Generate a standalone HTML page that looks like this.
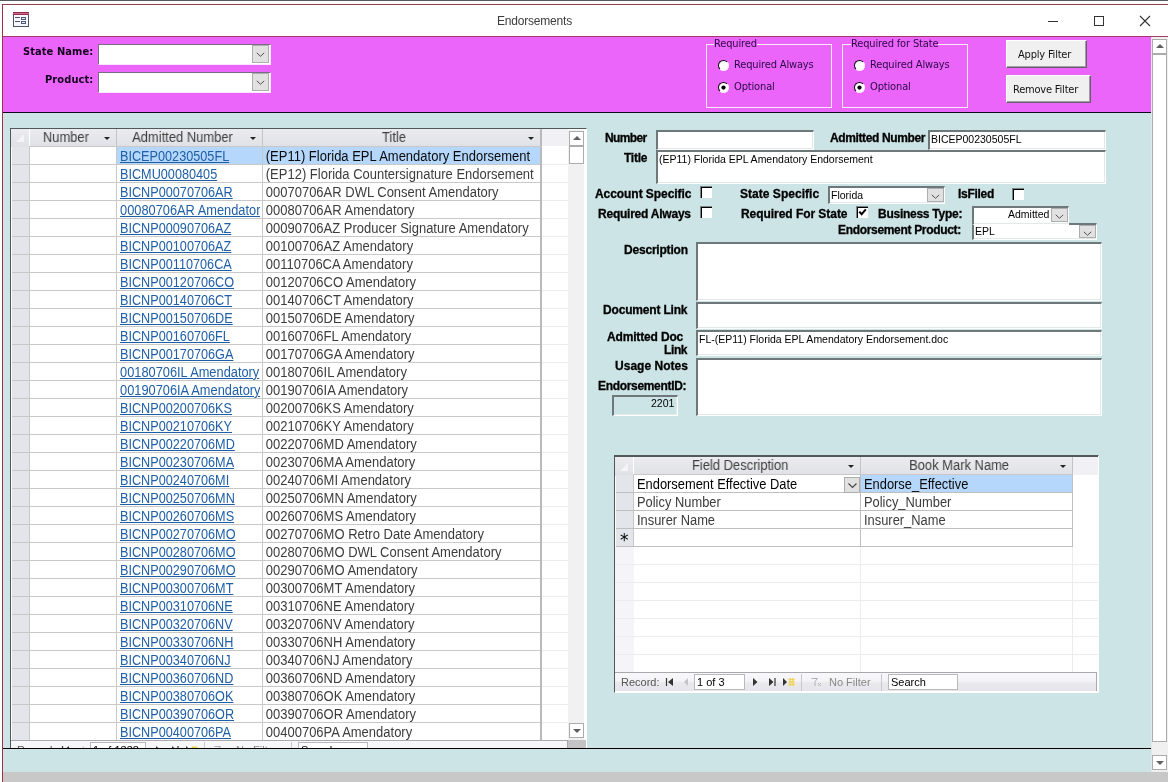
<!DOCTYPE html>
<html lang="en"><head><meta charset="utf-8"><title>Endorsements</title>
<style>
html,body{margin:0;padding:0}
body{width:1168px;height:782px;overflow:hidden;background:#fff;position:relative;font-family:"Liberation Sans",sans-serif;font-size:13px;color:#000}
div,span,i,b,u{box-sizing:border-box}
.abs,.x{position:absolute}
i{font-style:normal;display:block;position:absolute}
.x{white-space:nowrap;line-height:1}
/* frame */
#topline{left:0;top:0;width:1168px;height:1px;background:#545a5d}
#btop{left:2px;top:4px;width:1166px;height:1px;background:#8f3f47}
#bleft{left:2px;top:4px;width:1px;height:778px;background:#a03048}
#bsep{left:3px;top:36px;width:1165px;height:1px;background:#a23a6e}
#mag{left:3px;top:37px;width:1148px;height:75px;background:#ec65fa}
#magline{left:3px;top:112px;width:1148px;height:1px;background:#14061e}
#teal{left:3px;top:113px;width:1148px;height:659px;background:#cce4e5}
#botline{left:3px;top:748px;width:1148px;height:1px;background:#000}
#botgray{left:3px;top:772px;width:1165px;height:10px;background:#c8c8c9}
#gap{left:1151px;top:37px;width:1px;height:735px;background:#e6e6e6}
/* main scrollbar */
#vsb{left:1152px;top:37px;width:16px;height:735px;background:#f0f0f0}
.sbb{position:absolute;background:#fff;border:1px solid #acacac}
.tri-up{position:absolute;width:0;height:0;border-left:4px solid transparent;border-right:4px solid transparent;border-bottom:4px solid #606060}
.tri-dn{position:absolute;width:0;height:0;border-left:4px solid transparent;border-right:4px solid transparent;border-top:4px solid #606060}
/* title */
.ttl{font-size:12px;color:#3c3c3c;letter-spacing:-.2px}
/* header */
.hb{font-family:"DejaVu Sans Condensed","DejaVu Sans",sans-serif;font-stretch:condensed;font-weight:bold;font-size:11px;color:#12001c}
.hr{font-family:"DejaVu Sans Condensed","DejaVu Sans",sans-serif;font-stretch:condensed;font-size:11px;color:#2a0a45;letter-spacing:-.15px}
.hbtn{font-family:"DejaVu Sans Condensed","DejaVu Sans",sans-serif;font-stretch:condensed;font-size:11px;color:#111;letter-spacing:-.2px}
.combo{position:absolute;background:#fff;border-top:1px solid #7c6a86;border-left:1px solid #7c6a86;border-bottom:1px solid #fbe6fd;border-right:1px solid #fbe6fd}
.dd{position:absolute;width:17px;height:18px;background:#e1e1e1;border:1px solid #adadad}
.dd svg{position:absolute;left:3px;top:6px}
.grp{position:absolute;border:1px solid #fbe9fd}
.glab{position:absolute;background:#ec65fa}
.radio{position:absolute;width:11px;height:11px;border-radius:50%;background:#fff;border:1px solid #fdf0fe;border-top-color:#0a000e;border-left-color:#0a000e}
.radio b{position:absolute;left:2px;top:2px;width:5px;height:5px;border-radius:50%;background:#000;transform:scale(.85)}
.btn{position:absolute;background:#f0f0f0;border-top:1px solid #fff;border-left:1px solid #fff;border-right:1px solid #6a5a70;border-bottom:1px solid #6a5a70;box-shadow:inset -1px -1px 0 #a0a0a0}
/* detail */
.lb{font-weight:bold;font-size:12px;color:#000;-webkit-text-stroke:.3px #000}
.tx{font-size:10.5px;color:#000}
.box{position:absolute;background:#fff;border-top:2px solid #6e787a;border-left:2px solid #6e787a;border-bottom:1px solid #fff;border-right:1px solid #fff;box-shadow:inset -1px -1px 0 #e3e9e9}
.chk{position:absolute;width:12px;height:12px;background:#fff;border-top:1px solid #7a8486;border-left:1px solid #7a8486;box-shadow:inset 1px 1px 0 #000}
/* datasheet */
.ds{position:absolute;background:#fff;overflow:hidden}
.hd{position:absolute;top:0;height:17px;background:linear-gradient(#ebebf0,#e0e1e6);border-right:1px solid #c4c4c8;color:#404040;font-size:14px;line-height:17px;text-align:center;white-space:nowrap}
.hd b{display:inline-block;font-weight:normal;transform:scaleX(.924)}
.hd .arr{position:absolute;top:8px;width:0;height:0;border-left:3px solid transparent;border-right:3px solid transparent;border-top:3px solid #222}
.r{position:absolute;left:1px;height:18px;width:540px;border-bottom:1px solid #c8c8c8;font-size:14px;line-height:18px;color:#3c3c3c;white-space:nowrap}
.r .s{left:0;top:0;width:18px;height:17px;background:#e4e5ea;border-right:1px solid #c8c8c8}
.r .n{left:18px;top:0;width:87px;height:17px;border-right:1px solid #c8c8c8}
.r .a{position:absolute;left:105px;top:0;width:146px;height:17px;border-right:1px solid #c8c8c8;overflow:hidden;padding-left:3px;color:#1f5fa8}
.r .a u{display:block;width:153.6px;overflow:hidden;text-decoration:underline;text-underline-offset:1px;transform:scaleX(.905);transform-origin:0 0}
.r .t{position:absolute;left:251px;top:0;width:300.6px;height:17px;padding-left:3px;overflow:hidden;transform:scaleX(.928);transform-origin:0 0}
.r.sel .a,.r.sel .t{background:#b5d7fb}
.r.sel .t{color:#0a0a0a}
.nav{font-size:11px;color:#555}
.r2{position:absolute;left:1px;height:18px;width:457px;border-bottom:1px solid #bfbfbf;font-size:14px;line-height:18px;color:#3c3c3c;white-space:nowrap}
.r2 .s{left:0;top:0;width:18px;height:17px;background:#e4e5ea;border-right:1px solid #c8c8c8}
.r2 .a{position:absolute;left:18px;top:0;width:227px;height:17px;border-right:1px solid #bfbfbf;overflow:hidden;padding-left:3px}
.r2 .t{position:absolute;left:245px;top:0;width:212px;height:17px;padding-left:3px;overflow:hidden;border-right:1px solid #bfbfbf}
.r2.sel2 .t{background:#b5d7fb;color:#0a0a0a}
.hd.h18{top:1px;height:18px;line-height:16px}
.hd.h18 .arr{top:8px}
.r2 b{display:inline-block;font-weight:normal;transform:scaleX(.92);transform-origin:0 50%}
.box .dd svg{top:5px}
.x,.hd b,.r,.r2{will-change:transform}

</style></head>
<body>
<i id="topline"></i><i id="btop"></i><i id="bleft"></i><i id="bsep"></i>
<i id="mag"></i><i id="magline"></i><i id="teal"></i><i id="botline"></i><i id="botgray"></i><i id="gap"></i>

<!-- title bar -->
<svg class="abs" style="left:13px;top:12px" width="16" height="15" viewBox="0 0 16 15">
<rect x="0.5" y="0.5" width="15" height="14" fill="#f6f6fc" stroke="#4c526a"/>
<rect x="0" y="0" width="16" height="1" fill="#8e2c4a"/><rect x="0" y="1" width="16" height="1" fill="#d0688a"/><rect x="0" y="2" width="16" height="1" fill="#96304e"/>
<rect x="2" y="5" width="5" height="1" fill="#4c526a"/><rect x="2" y="9" width="5" height="1" fill="#4c526a"/>
<rect x="8.5" y="5.5" width="4" height="2" fill="#e6ecf8" stroke="#4c5872"/><rect x="8.5" y="9.5" width="4" height="2" fill="#e6ecf8" stroke="#4c5872"/>
</svg>
<span class="x ttl" id="wtitle" style="left:497px;top:15px">Endorsements</span>
<svg class="abs" style="left:1040px;top:10px" width="120" height="22" viewBox="0 0 120 22">
<path d="M8 11.5H18" stroke="#333" stroke-width="1" fill="none"/>
<rect x="54.5" y="6.5" width="9" height="9" stroke="#333" stroke-width="1" fill="none"/>
<path d="M100 6L110 16M110 6L100 16" stroke="#333" stroke-width="1.1" fill="none"/>
</svg>

<!-- main scrollbar -->
<div id="vsb" class="abs">
 <div class="sbb" style="left:0;top:2px;width:15px;height:15px"><i class="tri-up" style="left:2.5px;top:4px"></i></div>
 <div class="sbb" style="left:0;top:17px;width:15px;height:688px"></div>
 <div class="sbb" style="left:0;top:718px;width:15px;height:15px"><i class="tri-dn" style="left:2.5px;top:5px"></i></div>
</div>

<!-- header -->
<span class="x hb" id="l_state" style="left:23px;top:46px;letter-spacing:.08px">State Name:</span>
<span class="x hb" id="l_prod" style="left:44.5px;top:74px;letter-spacing:.1px">Product:</span>
<div class="combo" style="left:98px;top:44px;width:173px;height:21px"><div class="dd" style="left:153px;top:0px"><svg width="9" height="6" viewBox="0 0 9 6"><path d="M0.8 0.8L4.5 4.3L8.2 0.8" stroke="#505050" stroke-width="1" fill="none"/></svg></div></div>
<div class="combo" style="left:98px;top:72px;width:173px;height:21px"><div class="dd" style="left:153px;top:0px"><svg width="9" height="6" viewBox="0 0 9 6"><path d="M0.8 0.8L4.5 4.3L8.2 0.8" stroke="#505050" stroke-width="1" fill="none"/></svg></div></div>

<div class="grp" style="left:706px;top:44px;width:126px;height:64px"></div>
<span class="x hr glab" id="g1" style="left:714px;top:38px">Required</span>
<div class="radio" style="left:718px;top:60px"></div>
<div class="radio" style="left:718px;top:82px"><b></b></div>
<span class="x hr" id="g1a" style="left:734px;top:59px">Required Always</span>
<span class="x hr" id="g1b" style="left:734px;top:81px">Optional</span>

<div class="grp" style="left:842px;top:44px;width:126px;height:64px"></div>
<span class="x hr glab" id="g2" style="left:850.5px;top:38px">Required for State</span>
<div class="radio" style="left:854px;top:60px"></div>
<div class="radio" style="left:854px;top:82px"><b></b></div>
<span class="x hr" id="g2a" style="left:870px;top:59px">Required Always</span>
<span class="x hr" id="g2b" style="left:870px;top:81px">Optional</span>

<div class="btn" style="left:1006px;top:40px;width:81px;height:28px"></div>
<span class="x hbtn" id="b1" style="left:1017.5px;top:49px">Apply Filter</span>
<div class="btn" style="left:1006px;top:75px;width:85px;height:28px"></div>
<span class="x hbtn" id="b2" style="left:1013px;top:84px">Remove Filter</span>

<!-- left datasheet -->
<div class="ds" id="ds1" style="left:10px;top:128px;width:577px;height:620px;border-top:1px solid #50585a;border-left:1px solid #50585a;border-right:1px solid #fff">
 <div class="hd" style="left:0;width:18px;height:18px;border-right:0"><svg style="position:absolute;left:4px;top:4px" width="10" height="10"><path d="M9 1V9H1Z" fill="#f4f4f8"/></svg></div>
 <div class="hd" style="left:19px;width:87px;padding-right:15px"><b>Number</b><i class="arr" style="right:6px"></i></div>
 <div class="hd" style="left:106px;width:146px;padding-right:14px"><b>Admitted Number</b><i class="arr" style="right:6px"></i></div>
 <div class="hd" style="left:252px;width:279px;border-right:2px solid #b9b9bd;padding-right:16px"><b>Title</b><i class="arr" style="right:6px"></i></div>
 <div class="abs" style="left:531px;top:0;width:26px;height:17px;background:#f1f1f5"></div>
 <i style="left:18px;top:17px;width:513px;height:1px;background:#c8c8c8"></i>
<div class="r sel" style="top:18px"><i class="s"></i><i class="n"></i><span class="a"><u>BICEP00230505FL</u></span><span class="t">(EP11) Florida EPL Amendatory Endorsement</span></div>
<div class="r" style="top:36px"><i class="s"></i><i class="n"></i><span class="a"><u>BICMU00080405</u></span><span class="t">(EP12) Florida Countersignature Endorsement</span></div>
<div class="r" style="top:54px"><i class="s"></i><i class="n"></i><span class="a"><u>BICNP00070706AR</u></span><span class="t">00070706AR DWL Consent Amendatory</span></div>
<div class="r" style="top:72px"><i class="s"></i><i class="n"></i><span class="a"><u style="transform:scaleX(.916);width:153px">00080706AR Amendatory</u></span><span class="t">00080706AR Amendatory</span></div>
<div class="r" style="top:90px"><i class="s"></i><i class="n"></i><span class="a"><u>BICNP00090706AZ</u></span><span class="t">00090706AZ Producer Signature Amendatory</span></div>
<div class="r" style="top:108px"><i class="s"></i><i class="n"></i><span class="a"><u>BICNP00100706AZ</u></span><span class="t">00100706AZ Amendatory</span></div>
<div class="r" style="top:126px"><i class="s"></i><i class="n"></i><span class="a"><u>BICNP00110706CA</u></span><span class="t">00110706CA Amendatory</span></div>
<div class="r" style="top:144px"><i class="s"></i><i class="n"></i><span class="a"><u>BICNP00120706CO</u></span><span class="t">00120706CO Amendatory</span></div>
<div class="r" style="top:162px"><i class="s"></i><i class="n"></i><span class="a"><u>BICNP00140706CT</u></span><span class="t">00140706CT Amendatory</span></div>
<div class="r" style="top:180px"><i class="s"></i><i class="n"></i><span class="a"><u>BICNP00150706DE</u></span><span class="t">00150706DE Amendatory</span></div>
<div class="r" style="top:198px"><i class="s"></i><i class="n"></i><span class="a"><u>BICNP00160706FL</u></span><span class="t">00160706FL Amendatory</span></div>
<div class="r" style="top:216px"><i class="s"></i><i class="n"></i><span class="a"><u>BICNP00170706GA</u></span><span class="t">00170706GA Amendatory</span></div>
<div class="r" style="top:234px"><i class="s"></i><i class="n"></i><span class="a"><u style="transform:scaleX(.916);width:153px">00180706IL Amendatory</u></span><span class="t">00180706IL Amendatory</span></div>
<div class="r" style="top:252px"><i class="s"></i><i class="n"></i><span class="a"><u style="transform:scaleX(.916);width:153px">00190706IA Amendatory</u></span><span class="t">00190706IA Amendatory</span></div>
<div class="r" style="top:270px"><i class="s"></i><i class="n"></i><span class="a"><u>BICNP00200706KS</u></span><span class="t">00200706KS Amendatory</span></div>
<div class="r" style="top:288px"><i class="s"></i><i class="n"></i><span class="a"><u>BICNP00210706KY</u></span><span class="t">00210706KY Amendatory</span></div>
<div class="r" style="top:306px"><i class="s"></i><i class="n"></i><span class="a"><u>BICNP00220706MD</u></span><span class="t">00220706MD Amendatory</span></div>
<div class="r" style="top:324px"><i class="s"></i><i class="n"></i><span class="a"><u>BICNP00230706MA</u></span><span class="t">00230706MA Amendatory</span></div>
<div class="r" style="top:342px"><i class="s"></i><i class="n"></i><span class="a"><u>BICNP00240706MI</u></span><span class="t">00240706MI Amendatory</span></div>
<div class="r" style="top:360px"><i class="s"></i><i class="n"></i><span class="a"><u>BICNP00250706MN</u></span><span class="t">00250706MN Amendatory</span></div>
<div class="r" style="top:378px"><i class="s"></i><i class="n"></i><span class="a"><u>BICNP00260706MS</u></span><span class="t">00260706MS Amendatory</span></div>
<div class="r" style="top:396px"><i class="s"></i><i class="n"></i><span class="a"><u>BICNP00270706MO</u></span><span class="t">00270706MO Retro Date Amendatory</span></div>
<div class="r" style="top:414px"><i class="s"></i><i class="n"></i><span class="a"><u>BICNP00280706MO</u></span><span class="t">00280706MO DWL Consent Amendatory</span></div>
<div class="r" style="top:432px"><i class="s"></i><i class="n"></i><span class="a"><u>BICNP00290706MO</u></span><span class="t">00290706MO Amendatory</span></div>
<div class="r" style="top:450px"><i class="s"></i><i class="n"></i><span class="a"><u>BICNP00300706MT</u></span><span class="t">00300706MT Amendatory</span></div>
<div class="r" style="top:468px"><i class="s"></i><i class="n"></i><span class="a"><u>BICNP00310706NE</u></span><span class="t">00310706NE Amendatory</span></div>
<div class="r" style="top:486px"><i class="s"></i><i class="n"></i><span class="a"><u>BICNP00320706NV</u></span><span class="t">00320706NV Amendatory</span></div>
<div class="r" style="top:504px"><i class="s"></i><i class="n"></i><span class="a"><u>BICNP00330706NH</u></span><span class="t">00330706NH Amendatory</span></div>
<div class="r" style="top:522px"><i class="s"></i><i class="n"></i><span class="a"><u>BICNP00340706NJ</u></span><span class="t">00340706NJ Amendatory</span></div>
<div class="r" style="top:540px"><i class="s"></i><i class="n"></i><span class="a"><u>BICNP00360706ND</u></span><span class="t">00360706ND Amendatory</span></div>
<div class="r" style="top:558px"><i class="s"></i><i class="n"></i><span class="a"><u>BICNP00380706OK</u></span><span class="t">00380706OK Amendatory</span></div>
<div class="r" style="top:576px"><i class="s"></i><i class="n"></i><span class="a"><u>BICNP00390706OR</u></span><span class="t">00390706OR Amendatory</span></div>
<div class="r" style="top:594px"><i class="s"></i><i class="n"></i><span class="a"><u>BICNP00400706PA</u></span><span class="t">00400706PA Amendatory</span></div>
 <i style="left:529px;top:18px;width:2px;height:594px;background:#b9b9bd"></i>
 <!-- faint grid right of title -->
 <div class="abs" style="left:531px;top:18px;width:26px;height:594px;background:repeating-linear-gradient(#fff 0,#fff 17px,#ececec 17px,#ececec 18px)"></div>
 <!-- scrollbar -->
 <div class="abs" style="left:557px;top:1px;width:16px;height:610px;background:#f1f1f1">
  <div class="sbb" style="left:1px;top:1px;width:15px;height:15px"><i class="tri-up" style="left:2.5px;top:4px"></i></div>
  <div class="sbb" style="left:1px;top:16px;width:15px;height:18px"></div>
  <div class="sbb" style="left:1px;top:593px;width:15px;height:15px"><i class="tri-dn" style="left:2.5px;top:5px"></i></div>
 </div>
 <div class="abs" style="left:0;top:611px;width:557px;height:19px;background:linear-gradient(#f8f8fa 0,#f4f4f7 45%,#e9e9ed 55%,#e6e6ea 100%);border-top:1px solid #a9a9ad;border-right:1px solid #a9a9ad"></div>
 <span class="x nav" id="n_rec1" style="left:6px;top:616px">Record:</span>
 <svg class="abs" style="left:50px;top:616px" width="30" height="10" viewBox="0 0 30 10"><path d="M1.5 1V9" stroke="#333" stroke-width="1.2"/><path d="M8 1V9L3 5Z" fill="#333"/><path d="M23 1V9L19 5Z" fill="#c4c4c8"/></svg>
 <div class="abs" style="left:79px;top:613px;width:56px;height:16px;background:#fff;border:1px solid #b9b9bd"></div>
 <span class="x nav" id="n_pos1" style="left:82px;top:616px;color:#000">1 of 1338</span>
 <svg class="abs" style="left:144px;top:616px" width="46" height="10" viewBox="0 0 46 10"><path d="M1 1V9L5.5 5Z" fill="#333"/><path d="M17 1V9L21.5 5Z" fill="#333"/><path d="M23 1V9" stroke="#333" stroke-width="1.2"/><path d="M31 1V9L35 5Z" fill="#333"/><path d="M36.5 2.5h6M36.5 5h6M36.5 7.5h6M38 1v8M41 1v8" stroke="#efd45a" stroke-width="1.3"/></svg>
 <i style="left:193px;top:613px;width:1px;height:17px;background:#c8c8cc"></i>
 <svg class="abs" style="left:203px;top:617px" width="12" height="10" viewBox="0 0 12 10"><path d="M0.5 0.5h6L4 3.5V8" stroke="#b0b0b4" fill="none"/><path d="M7 5l3 3M10 5l-3 3" stroke="#b0b0b4" stroke-width=".8"/></svg>
 <span class="x nav" id="n_nf1" style="left:225px;top:616px;color:#888">No Filter</span>
 <i style="left:280px;top:613px;width:1px;height:17px;background:#c8c8cc"></i>
 <div class="abs" style="left:287px;top:613px;width:70px;height:16px;background:#fff;border:1px solid #b9b9bd"></div>
 <span class="x nav" id="n_srch1" style="left:290px;top:616px;color:#000">Search</span>
 <div class="abs" style="left:557px;top:611px;width:18px;height:9px;background:#c3c3c6"></div>
</div>

<!-- detail panel -->
<span class="x lb" id="d_number" style="left:605.1px;top:132px;letter-spacing:-0.64px">Number</span>
<span class="x lb" id="d_admnum" style="left:829.9px;top:132px;letter-spacing:-0.38px">Admitted Number</span>
<span class="x lb" id="d_title" style="left:623.9px;top:152px;letter-spacing:-0.27px">Title</span>
<span class="x lb" id="d_acct" style="left:594.5px;top:188px;letter-spacing:-0.06px">Account Specific</span>
<span class="x lb" id="d_stsp" style="left:739.5px;top:188px;letter-spacing:0.03px">State Specific</span>
<span class="x lb" id="d_isfiled" style="left:958.0px;top:188px;letter-spacing:-0.29px">IsFiled</span>
<span class="x lb" id="d_reqalw" style="left:598.0px;top:208px;letter-spacing:-0.23px">Required Always</span>
<span class="x lb" id="d_reqst" style="left:740.5px;top:208px;letter-spacing:-0.05px">Required For State</span>
<span class="x lb" id="d_btype" style="left:878.1px;top:208px;letter-spacing:-0.26px">Business Type:</span>
<span class="x lb" id="d_eprod" style="left:838.2px;top:224px;letter-spacing:-0.32px">Endorsement Product:</span>
<span class="x lb" id="d_desc" style="left:623.5px;top:244px;letter-spacing:-0.20px">Description</span>
<span class="x lb" id="d_doclink" style="left:603.0px;top:304px;letter-spacing:-0.18px">Document Link</span>
<span class="x lb" id="d_adm1" style="left:607.2px;top:331px;letter-spacing:-0.16px">Admitted Doc</span>
<span class="x lb" id="d_adm2" style="left:664.0px;top:344px;letter-spacing:-0.39px">Link</span>
<span class="x lb" id="d_usage" style="left:614.5px;top:360px;letter-spacing:0.03px">Usage Notes</span>
<span class="x lb" id="d_eid" style="left:598.0px;top:380px;letter-spacing:-0.32px">EndorsementID:</span>
<div class="box" style="left:656px;top:130px;width:158px;height:20px"></div>
<div class="box" style="left:928px;top:130px;width:178px;height:20px"></div>
<span class="x tx" id="v_admnum" style="left:931px;top:134px">BICEP00230505FL</span>
<div class="box" style="left:656px;top:150px;width:450px;height:34px"></div>
<span class="x tx" id="v_title" style="left:659px;top:154px">(EP11) Florida EPL Amendatory Endorsement</span>

<div class="chk" style="left:700px;top:186px"></div>
<div class="box" style="left:828px;top:186px;width:117px;height:18px"><div class="dd" style="left:97px;top:0;height:14px"><svg width="9" height="6" viewBox="0 0 9 6"><path d="M0.8 0.8L4.5 4.3L8.2 0.8" stroke="#505050" stroke-width="1" fill="none"/></svg></div></div>
<span class="x tx" id="v_state" style="left:831px;top:190px">Florida</span>
<div class="chk" style="left:1012px;top:188px"></div>

<div class="chk" style="left:700px;top:206px"></div>
<div class="chk" style="left:856px;top:206px"><svg style="position:absolute;left:-1px;top:-1px" width="12" height="12" viewBox="0 0 12 12"><path d="M3.3 5.6L5.6 8.1L9.8 3.4" stroke="#000" stroke-width="2.1" fill="none"/></svg></div>

<div class="box" style="left:972px;top:223px;width:125px;height:17px"><div class="dd" style="left:105px;top:0;height:13px"><svg width="9" height="6" viewBox="0 0 9 6"><path d="M0.8 0.8L4.5 4.3L8.2 0.8" stroke="#505050" stroke-width="1" fill="none"/></svg></div></div>
<div class="box" style="left:972px;top:206px;width:97px;height:19px"><div class="dd" style="left:77px;top:0;height:14px"><svg width="9" height="6" viewBox="0 0 9 6"><path d="M0.8 0.8L4.5 4.3L8.2 0.8" stroke="#505050" stroke-width="1" fill="none"/></svg></div></div>
<span class="x tx" id="v_btype" style="left:1008px;top:209px">Admitted</span>
<span class="x tx" id="v_eprod" style="left:975px;top:226px">EPL</span>

<div class="box" style="left:696px;top:242px;width:406px;height:59px"></div>
<div class="box" style="left:696px;top:302px;width:406px;height:27px"></div>
<div class="box" style="left:696px;top:330px;width:406px;height:26px"></div>
<span class="x tx" id="v_admdoc" style="left:699px;top:334px">FL-(EP11) Florida EPL Amendatory Endorsement.doc</span>
<div class="box" style="left:696px;top:358px;width:406px;height:58px"></div>
<div class="box" style="left:612px;top:395px;width:66px;height:21px;background:#cce4e5"></div>
<span class="x tx" id="v_eid" style="left:651px;top:398px">2201</span>

<!-- sub datasheet -->
<div class="ds" id="ds2" style="left:614px;top:455px;width:485px;height:238px;border-top:1px solid #50585a;border-left:1px solid #50585a;border-right:1px solid #fff;border-bottom:1px solid #fff">
 <i style="left:0;top:0;width:484px;height:1px;background:#50585a;z-index:3"></i>
 <div class="hd h18" style="left:0;width:18px;height:19px;border-right:0"><svg style="position:absolute;left:4px;top:5px" width="10" height="10"><path d="M9 1V9H1Z" fill="#f4f4f8"/></svg></div>
 <div class="hd h18" style="left:19px;width:227px;padding-right:14px"><b>Field Description</b><i class="arr" style="right:6px"></i></div>
 <div class="hd h18" style="left:246px;width:212px;padding-right:14px"><b>Book Mark Name</b><i class="arr" style="right:6px"></i></div>
 <div class="abs" style="left:458px;top:1px;width:25px;height:18px;background:#f1f1f5"></div>
 <i style="left:18px;top:18px;width:440px;height:1px;background:#c8c8c8"></i>
 <div class="r2 sel2" style="top:19px"><i class="s"></i><span class="a" style="color:#000"><b>Endorsement Effective Date</b></span><span class="t"><b>Endorse_Effective</b></span></div>
 <div class="r2" style="top:37px"><i class="s"></i><span class="a"><b>Policy Number</b></span><span class="t"><b>Policy_Number</b></span></div>
 <div class="r2" style="top:55px"><i class="s"></i><span class="a"><b>Insurer Name</b></span><span class="t"><b>Insurer_Name</b></span></div>
 <div class="r2" style="top:73px"><i class="s"></i><span class="a"><b></b></span><span class="t"><b></b></span></div>
 <div class="dd" style="left:229px;top:21px;width:16px;height:16px"><svg width="9" height="6" viewBox="0 0 9 6" style="left:3px;top:5px"><path d="M0.5 0.5L4.5 4.5L8.5 0.5" stroke="#444" stroke-width="1.1" fill="none"/></svg></div>
 <span class="x" style="left:5px;top:76px;font-size:17px;line-height:17px;font-family:'DejaVu Sans',sans-serif">*</span>
 <!-- faint grid -->
 <div class="abs" style="left:0;top:91px;width:483px;height:125px;background:repeating-linear-gradient(#fff 0,#fff 17px,#ececec 17px,#ececec 18px)"></div>
 <div class="abs" style="left:0;top:91px;width:19px;height:125px;background:repeating-linear-gradient(#f5f5f9 0,#f5f5f9 17px,#ececec 17px,#ececec 18px)"></div>
 <i style="left:245px;top:91px;width:1px;height:125px;background:#ececec"></i>
 <i style="left:457px;top:91px;width:1px;height:125px;background:#ececec"></i>
 <div class="abs" style="left:0;top:216px;width:482px;height:19px;background:linear-gradient(#f8f8fa 0,#f4f4f7 45%,#e9e9ed 55%,#e6e6ea 100%);border-top:1px solid #a9a9ad;border-right:1px solid #a9a9ad"></div>
 <span class="x nav" id="n_rec" style="left:6px;top:221px">Record:</span>
 <svg class="abs" style="left:50px;top:221px" width="30" height="10" viewBox="0 0 30 10"><path d="M1.5 1V9" stroke="#333" stroke-width="1.2"/><path d="M8 1V9L3 5Z" fill="#333"/><path d="M23 1V9L19 5Z" fill="#c4c4c8"/></svg>
 <div class="abs" style="left:79px;top:218px;width:51px;height:16px;background:#fff;border:1px solid #b9b9bd"></div>
 <span class="x nav" id="n_pos" style="left:82px;top:221px;color:#000">1 of 3</span>
 <svg class="abs" style="left:137px;top:221px" width="46" height="10" viewBox="0 0 46 10"><path d="M1 1V9L5.5 5Z" fill="#333"/><path d="M17 1V9L21.5 5Z" fill="#333"/><path d="M23 1V9" stroke="#333" stroke-width="1.2"/><path d="M31 1V9L35 5Z" fill="#333"/><path d="M36.5 2.5h6M36.5 5h6M36.5 7.5h6M38 1v8M41 1v8" stroke="#efd45a" stroke-width="1.3"/></svg>
 <i style="left:186px;top:218px;width:1px;height:17px;background:#c8c8cc"></i>
 <svg class="abs" style="left:196px;top:222px" width="12" height="10" viewBox="0 0 12 10"><path d="M0.5 0.5h6L4 3.5V8" stroke="#b0b0b4" fill="none"/><path d="M7 5l3 3M10 5l-3 3" stroke="#b0b0b4" stroke-width=".8"/></svg>
 <span class="x nav" id="n_nf" style="left:214px;top:221px;color:#888">No Filter</span>
 <i style="left:266px;top:218px;width:1px;height:17px;background:#c8c8cc"></i>
 <div class="abs" style="left:273px;top:218px;width:70px;height:16px;background:#fff;border:1px solid #b9b9bd"></div>
 <span class="x nav" id="n_srch" style="left:276px;top:221px;color:#000">Search</span>
</div>

</body></html>
